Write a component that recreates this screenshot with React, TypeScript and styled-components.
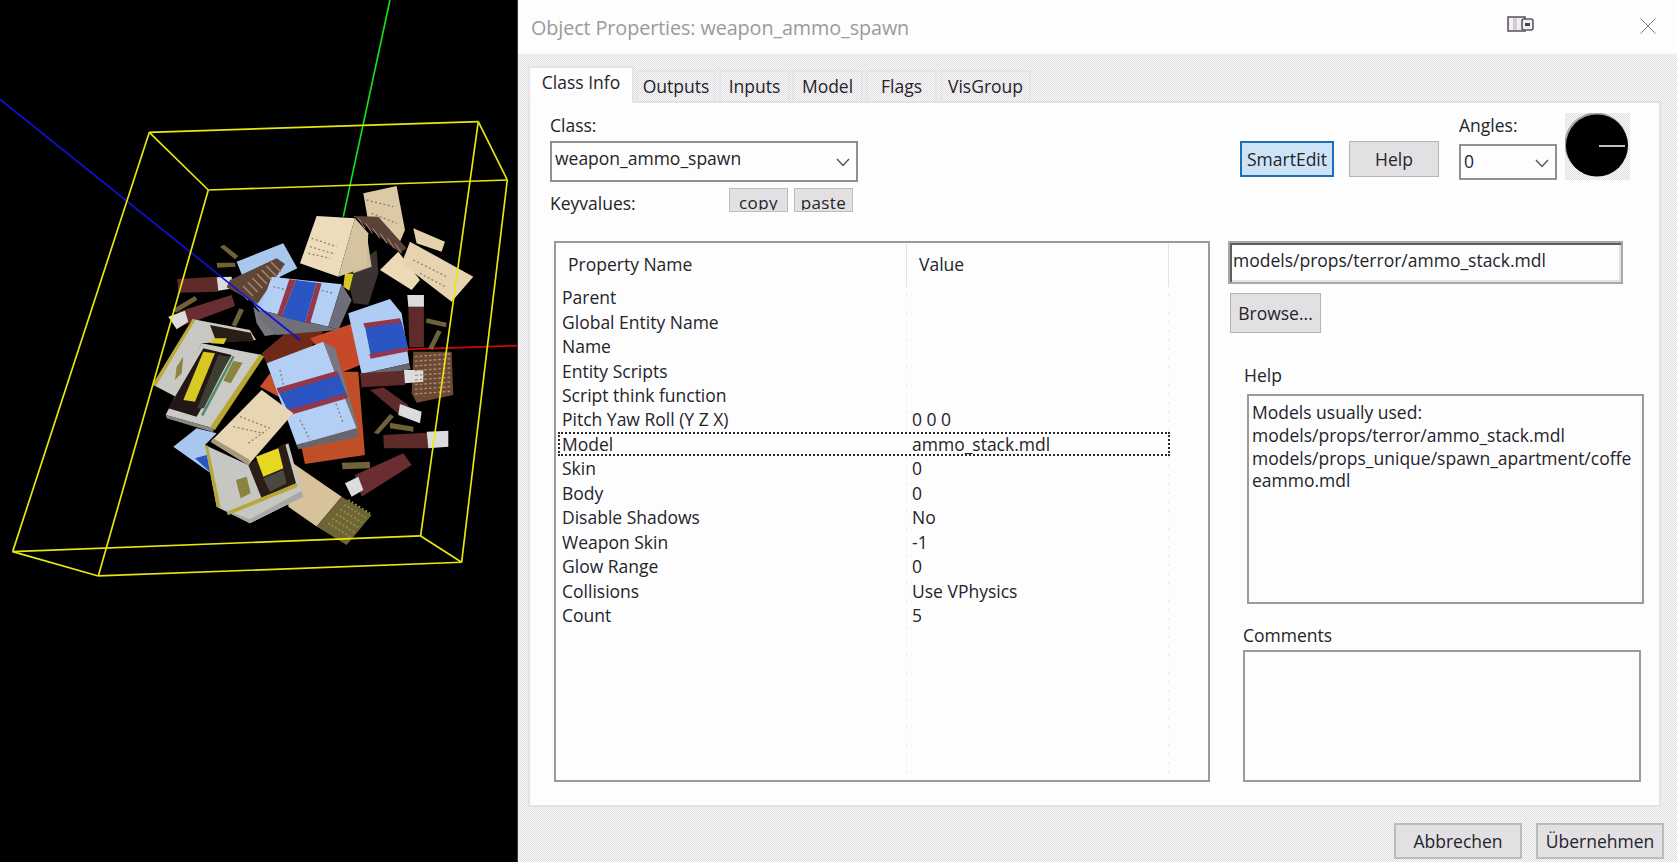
import React from "react";
import styled, { createGlobalStyle, css } from "styled-components";

const Global = createGlobalStyle`
  html, body { margin: 0; padding: 0; background: #000; }
  body { width: 1677px; height: 862px; overflow: hidden; }
  * { box-sizing: border-box; }
`;

const dither = css`
  background-color: #f0eef0;
  background-image: repeating-conic-gradient(#fbfbfb 0 25%, #dfdbe0 0 50%);
  background-size: 2px 2px;
`;

const Page = styled.div`
  display: flex;
  width: 1677px;
  height: 862px;
  font-family: "Open Sans", "Noto Sans", sans-serif;
  font-size: 17.5px;
  color: #24242c;
  letter-spacing: 0;
`;
const Viewport = styled.div`
  width: 517px;
  height: 862px;
  background: #000;
  flex: none;
  overflow: hidden;
`;
const ModelSvg = styled.svg`
  display: block;
`;
const Dialog = styled.div`
  flex: 1;
  display: flex;
  flex-direction: column;
  ${dither}
  border-left: 1px solid #3a3a3a;
`;
const TitleBar = styled.div`
  height: 54px;
  background: #fdfdfd;
  display: flex;
  align-items: center;
  padding-left: 13px;
  flex: none;
`;
const Title = styled.div`
  font-size: 19.8px;
  color: #9a9a9a;
  letter-spacing: -0.1px;
  flex: 1;
`;
const CaptionIcon = styled.svg`
  display: block;
  margin-right: 105px;
  margin-top: -6px;
`;
const CloseIcon = styled.svg`
  display: block;
  margin-right: 21px;
  margin-top: -2px;
`;
const Tabs = styled.div`
  display: flex;
  align-items: flex-end;
  height: 35px;
  margin: 12px 0 0 10px;
  flex: none;
`;
const Tab = styled.div<{ $active?: boolean; $w: number; $gap: number }>`
  width: ${(p) => p.$w}px;
  margin-right: ${(p) => p.$gap}px;
  display: flex;
  align-items: center;
  justify-content: center;
  white-space: nowrap;
  border: 2px solid #e6e4e6;
  border-bottom: none;
  ${(p) =>
    p.$active
      ? css`
          height: 37px;
          margin-bottom: -2px;
          padding-bottom: 7px;
          background: #fdfdfd;
          position: relative;
          z-index: 1;
        `
      : css`
          height: 31px;
          padding-bottom: 2px;
          ${dither}
        `}
`;
const Panel = styled.div`
  width: 1133px;
  height: 706px;
  margin-left: 10px;
  background: #fdfdfd;
  border: 2px solid #e4e2e4;
  padding: 0 0 0 24px;
  flex: none;
`;
const TopSection = styled.div`
  height: 138px;
  display: flex;
  margin-left: -4px;
`;
const ClassBlock = styled.div`
  width: 308px;
  flex: none;
  padding-top: 11px;
`;
const Label = styled.div`
  height: 22px;
  line-height: 22px;
`;
const Combo = styled.div<{ $w: number; $h: number }>`
  width: ${(p) => p.$w}px;
  height: ${(p) => p.$h}px;
  border: 2px solid #8f8f94;
  background: #fdfdfd;
  display: flex;
  align-items: center;
  justify-content: space-between;
  padding: 0 6px 2px 3px;
`;
const ClassCombo = styled(Combo)`
  margin-top: 5px;
  padding-bottom: 7px;
`;
const ChevronMark = styled.svg<{ $drop: number }>`
  display: block;
  margin-top: ${(p) => p.$drop}px;
`;
const KeyRow = styled.div`
  display: flex;
  margin-top: 6px;
`;
const KeyLabel = styled.div`
  width: 179px;
  line-height: 22px;
  padding-top: 4px;
`;
const MiniButton = styled.div<{ $gap?: number }>`
  width: 59px;
  height: 24px;
  margin-left: ${(p) => p.$gap ?? 0}px;
  background: #e2e0e2;
  border: 1px solid #bdbdbd;
  text-align: center;
  font-size: 17px;
  font-weight: 500;
  letter-spacing: 0.4px;
`;
const MiniClip = styled.div`
  height: 21px;
  line-height: 27px;
  overflow: hidden;
`;
const ActionBlock = styled.div`
  display: flex;
  margin-left: 382px;
  flex: none;
`;
const Button = styled.div<{ $w: number; $h: number; $primary?: boolean }>`
  width: ${(p) => p.$w}px;
  height: ${(p) => p.$h}px;
  flex: none;
  display: flex;
  align-items: center;
  justify-content: center;
  white-space: nowrap;
  background: ${(p) => (p.$primary ? "#cde4f7" : "#e2e0e2")};
  border: ${(p) => (p.$primary ? "2px solid #1a6fb5" : "1px solid #b4b4b4")};
`;
const SmartButton = styled(Button)`
  margin-top: 38px;
`;
const HelpButton = styled(Button)`
  margin: 38px 20px 0 15px;
`;
const AnglesColumn = styled.div`
  width: 98px;
  padding-top: 11px;
  flex: none;
`;
const AngleCombo = styled(Combo)`
  margin-top: 8px;
`;
const DialFrame = styled.div`
  width: 65px;
  height: 67px;
  margin: 10px 0 0 8px;
  flex: none;
  ${dither}
`;
const DialFace = styled.svg`
  display: block;
`;
const BottomSection = styled.div`
  display: flex;
  gap: 18px;
`;
const ListBox = styled.div`
  width: 656px;
  height: 541px;
  border: 2px solid #9a9a9e;
  flex: none;
  padding-top: 1px;
`;
const ListHeader = styled.div`
  display: grid;
  grid-template-columns: 351px 262px;
  height: 41px;
`;
const HeaderCell = styled.div`
  height: 41px;
  display: flex;
  align-items: center;
  padding-left: 12px;
  padding-bottom: 2px;
  border-right: 1px solid #e8e0e4;
`;
const RowArea = styled.div`
  background-image:
    linear-gradient(to bottom, #e6e6e6 25%, transparent 25%),
    linear-gradient(to bottom, #e6e6e6 25%, transparent 25%);
  background-size: 1px 9px, 1px 9px;
  background-position: 350px 0, 612px 0;
  background-repeat: repeat-y;
  height: 495px;
`;
const Row = styled.div<{ $selected?: boolean }>`
  display: grid;
  grid-template-columns: 350px 1fr;
  height: 24.46px;
  margin-left: 2px;
  width: 612px;
  padding-left: 4px;
  align-items: center;
  white-space: nowrap;
  ${(p) =>
    p.$selected &&
    css`
      outline: 2px dotted #2a2a2a;
      outline-offset: -2px;
      background: #fdfdfd;
    `}
`;
const SideColumn = styled.div`
  width: 420px;
  flex: none;
`;
const PathField = styled.div`
  width: 395px;
  height: 43px;
  border: 2px solid #a8a8aa;
  box-shadow: inset 2px 2px 0 #5c5c62, inset -2px -2px 0 #e2e2e4;
  background: #fdfdfd;
  padding: 5px 3px;
  line-height: 24px;
`;
const BrowseButton = styled(Button)`
  margin: 9px 0 0 2px;
`;
const HelpLabel = styled(Label)`
  margin: 31px 0 0 16px;
`;
const HelpBox = styled.div`
  width: 397px;
  height: 210px;
  margin: 8px 0 0 19px;
  border: 2px solid #9a9a9e;
  padding: 5px 3px;
  line-height: 22.8px;
  white-space: pre;
  overflow: hidden;
`;
const CommentsLabel = styled(Label)`
  margin: 20px 0 0 15px;
`;
const CommentsBox = styled.div`
  width: 398px;
  height: 132px;
  margin: 4px 0 0 15px;
  border: 2px solid #9a9a9e;
`;
const Footer = styled.div`
  display: flex;
  justify-content: flex-end;
  gap: 14px;
  padding: 16px 13px 0 0;
`;
const FooterButton = styled(Button)`
  border: 2px solid #b9bdb9;
`;

const Chevron = ({ drop = 0 }: { drop?: number }) => (
  <ChevronMark $drop={drop} width="14" height="9" viewBox="0 0 14 9">
    <path d="M1 1l6 6.5L13 1" fill="none" stroke="#55555c" strokeWidth="1.4" />
  </ChevronMark>
);

type Poly = [string, string];
const polys: Poly[] = [
  // back cream boxes
  ["1090,280 1190,258 1215,390 1200,425 1105,365", "#dcc9a6"],
  ["1040,515 1130,450 1135,520 1105,615 1060,610", "#3a3230"],
  ["1035,520 1060,522 1048,572 1030,560", "#d8c820"],
  ["1050,430 1100,400 1115,500 1060,520", "#cdb994"],
  ["1240,385 1335,425 1325,455 1250,430", "#e4d1ad"],
  ["1140,510 1195,455 1260,540 1235,570", "#ecd9b6"],
  ["1230,425 1420,530 1355,605 1205,490", "#e6d3b0"],
  ["950,348 1065,355 1015,530 900,490", "#ecdcbc"],
  ["1065,355 1105,400 1100,500 1015,530", "#d6c4a0"],
  ["1060,348 1135,350 1220,445 1200,458", "#5a4238"],
  // back bullets
  ["660,440 672,434 715,468 705,478", "#6f6238"],
  ["650,488 705,488 707,500 652,503", "#6f6238"],
  ["518,628 585,588 592,600 528,638", "#6f6238"],
  ["695,675 718,625 732,630 708,680", "#6f6238"],
  // shells
  ["532,537 650,530 655,575 535,578", "#5e2a2c"],
  ["650,532 695,530 700,565 655,572", "#dcdcdc"],
  ["535,635 695,585 705,618 540,680", "#6a2e30"],
  ["505,650 555,632 565,665 530,688", "#dcdcdc"],
  // back blue box
  ["710,485 850,430 892,505 840,530 785,640 760,610", "#a9c7ee"],
  ["760,620 850,700 795,708 770,670", "#77777f"],
  ["690,540 830,475 855,492 772,612 680,562", "#5f4535"],
  // orange
  ["785,760 880,680 970,695 930,745 800,790", "#6e2a14"],
  ["930,715 1060,670 1095,660 1130,775 1020,820", "#c8482a"],
  ["1000,815 1075,815 1095,1065 915,1092 905,1045", "#bf4f28"],
  ["780,860 810,820 845,895", "#c8502c"],
  // center blue
  ["815,530 1025,553 985,680 780,630", "#b4cff5"],
  ["1025,553 1055,600 1015,690 985,680", "#6e6e78"],
  ["780,630 985,680 1015,690 830,705 775,650", "#6f6f78"],
  ["888,540 950,548 915,668 845,650", "#2a55c2"],
  ["868,538 888,540 845,650 832,645", "#94374a"],
  ["950,548 965,550 930,672 915,668", "#94374a"],
  // right blue
  ["1045,640 1170,597 1205,640 1228,790 1085,822", "#b0ccf4"],
  ["1095,680 1205,665 1225,745 1112,765", "#2a55c2"],
  ["1090,670 1200,655 1205,667 1095,684", "#94374a"],
  ["1108,762 1222,742 1225,754 1112,776", "#94374a"],
  ["1085,822 1228,790 1232,808 1085,835", "#66666e"],
  // right shell + bullets
  ["1225,620 1272,620 1272,742 1228,742", "#5e2a2c"],
  ["1222,585 1272,585 1272,620 1225,620", "#dcdcdc"],
  ["1280,655 1340,668 1338,682 1278,668", "#6f6238"],
  ["1285,745 1312,690 1325,695 1298,750", "#6f6238"],
  // brick ammo
  ["1240,755 1355,755 1360,885 1250,908 1235,880", "#6b4a36"],
  ["1080,820 1215,812 1215,855 1085,862", "#5e2a2c"],
  ["1212,810 1270,810 1270,845 1215,850", "#dcdcdc"],
  ["1110,870 1150,862 1225,915 1200,945", "#5e2a2c"],
  ["1200,912 1265,935 1260,970 1195,945", "#dcdcdc"],
  ["1122,998 1170,942 1182,950 1135,1003", "#6f6238"],
  ["1170,968 1240,980 1240,995 1170,985", "#6f6238"],
  ["1150,1005 1280,998 1285,1045 1152,1045", "#5e2a2c"],
  ["1280,995 1345,992 1345,1040 1285,1045", "#dcdcdc"],
  ["1025,1088 1110,1085 1110,1105 1028,1108", "#6f6238"],
  ["1065,1125 1210,1060 1235,1095 1085,1190", "#6a2e30"],
  ["1035,1150 1075,1130 1090,1170 1055,1190", "#dcdcdc"],
  // front blue
  ["800,790 970,725 1070,985 890,1035", "#b4cff5"],
  ["970,725 1005,745 1075,985 1070,985", "#77777f"],
  ["890,1035 1070,985 1075,1010 895,1048", "#66666e"],
  ["835,875 1015,820 1040,885 865,935", "#2a55c2"],
  ["830,865 1012,812 1016,826 836,880", "#94374a"],
  ["862,930 1040,880 1044,894 868,946", "#94374a"],
  // bullets box behind
  ["580,658 750,690 768,720 605,730 530,892 460,855", "#c9c9c4"],
  ["630,675 752,698 762,722 650,728", "#2a1c14"],
  ["640,715 680,715 672,732 632,730", "#d8c820"],
  ["578,656 586,660 468,858 458,853", "#bda938"],
  ["530,800 550,770 545,820 525,840", "#8a8440"],
  // bullets box front
  ["605,730 785,765 640,985 497,945", "#cacac6"],
  ["610,745 695,765 590,950 505,925", "#241814"],
  ["610,755 645,760 585,905 550,900", "#d8c820"],
  ["655,765 690,770 612,925 592,925", "#3c3c30"],
  ["697,768 704,770 610,948 603,945", "#4e8a6a"],
  ["780,762 792,770 645,990 628,985", "#b8a830"],
  ["700,782 728,788 692,850 670,842", "#8a8440"],
  ["497,945 640,985 640,997 500,955", "#888880"],
  // small blue + cream
  ["520,1040 590,985 650,1000 615,1035 640,1125", "#a9c7ee"],
  ["585,1075 620,1065 640,1125", "#2a55c2"],
  ["865,1080 1025,1190 950,1280 865,1220", "#d8c29c"],
  ["1025,1190 1115,1245 1040,1335 950,1280", "#6d6536"],
  // yellow box front
  ["615,1035 745,1095 865,1030 910,1190 750,1270 650,1220", "#c6c6c2"],
  ["745,1095 855,1030 888,1150 785,1195", "#2a1c14"],
  ["768,1070 835,1045 850,1105 790,1130", "#e6d820"],
  ["790,1135 850,1110 860,1150 810,1175", "#4a4a40"],
  ["615,1035 624,1038 662,1222 650,1220", "#b8a830"],
  ["680,1235 890,1150 893,1160 684,1246", "#b8a830"],
  ["650,1220 750,1270 910,1190 905,1172 750,1258", "#a8a8a4"],
  ["708,1140 740,1130 752,1180 722,1195", "#8a8440"],
  // front cream
  ["632,1025 785,870 880,940 745,1095", "#e8d5b2"],
  ["632,1025 745,1095 750,1080 640,1015", "#a8987c"],
];

const specks: [number, number, number, number][] = [
  [935, 415, 1010, 440], [930, 440, 1005, 462], [925, 460, 990, 475],
  [700, 980, 790, 1000], [720, 950, 810, 985], [745, 1030, 800, 990],
  [1100, 300, 1180, 320], [1115, 340, 1190, 370], [1240, 480, 1340, 530],
  [1260, 520, 1335, 560], [840, 810, 860, 900], [900, 960, 930, 1020],
  [985, 850, 1030, 970], [820, 560, 860, 570], [940, 565, 1000, 580],
];

const wires: [number, number, number, number][] = [
  [448, 97, 1435, 65], [448, 97, 38, 1355], [38, 1355, 1262, 1308], [1435, 65, 1262, 1308],
  [625, 270, 1522, 240], [625, 270, 295, 1428], [295, 1428, 1385, 1387], [1522, 240, 1385, 1387],
  [448, 97, 625, 270], [1435, 65, 1522, 240], [1262, 1308, 1385, 1387], [38, 1355, 295, 1428],
];

const Model = () => (
  <ModelSvg width="517" height="862" viewBox="0 0 517 862">
    <defs>
      <filter id="soft" x="-5%" y="-5%" width="110%" height="110%">
        <feGaussianBlur stdDeviation="1.2" />
      </filter>
    </defs>
    <g transform="translate(0 100) scale(0.3333)">
      <line x1="1170" y1="-300" x2="1030" y2="350" stroke="#14e014" strokeWidth="5" />
      <line x1="1220" y1="748" x2="1551" y2="737" stroke="#d00808" strokeWidth="5" />
      <g filter="url(#soft)">
        {polys.map(([points, fill], i) => (
          <polygon key={i} points={points} fill={fill} />
        ))}
        {specks.map(([a, b, c, d], i) => (
          <line key={i} x1={a} y1={b} x2={c} y2={d} stroke="#6d6050" strokeWidth="4" strokeDasharray="6 7" opacity="0.7" />
        ))}
        {Array.from({ length: 9 }, (_, i) => (
          <line key={i} x1={1245} y1={770 + i * 14} x2={1352} y2={762 + i * 14} stroke="#b48c70" strokeWidth="4" strokeDasharray="8 6" />
        ))}
        {Array.from({ length: 8 }, (_, i) => (
          <line key={i} x1={715 + i * 14} y1={570 - i * 12} x2={745 + i * 14} y2={600 - i * 12} stroke="#b08a6c" strokeWidth="4" />
        ))}
        {Array.from({ length: 6 }, (_, i) => (
          <line key={i} x1={1075 + i * 22} y1={355 + i * 15} x2={1095 + i * 22} y2={385 + i * 15} stroke="#ab8f80" strokeWidth="3" />
        ))}
        {Array.from({ length: 6 }, (_, i) => (
          <line key={i} x1={985 + i * 12} y1={1270 - i * 14} x2={1050 + i * 12} y2={1310 - i * 14} stroke="#9c9048" strokeWidth="5" strokeDasharray="6 6" />
        ))}
      </g>
      <line x1="-65" y1="-54" x2="900" y2="720" stroke="#1010d8" strokeWidth="5" />
      {wires.map(([a, b, c, d], i) => (
        <line key={i} x1={a} y1={b} x2={c} y2={d} stroke="#e8e810" strokeWidth="5" />
      ))}
    </g>
  </ModelSvg>
);

const rows: [string, string, boolean?][] = [
  ["Parent", ""],
  ["Global Entity Name", ""],
  ["Name", ""],
  ["Entity Scripts", ""],
  ["Script think function", ""],
  ["Pitch Yaw Roll (Y Z X)", "0 0 0"],
  ["Model", "ammo_stack.mdl", true],
  ["Skin", "0"],
  ["Body", "0"],
  ["Disable Shadows", "No"],
  ["Weapon Skin", "-1"],
  ["Glow Range", "0"],
  ["Collisions", "Use VPhysics"],
  ["Count", "5"],
];

export default function App() {
  return (
    <Page>
      <Global />
      <Viewport>
        <Model />
      </Viewport>
      <Dialog>
        <TitleBar>
          <Title>Object Properties: weapon_ammo_spawn</Title>
          <CaptionIcon width="28" height="18" viewBox="0 0 28 18">
            <rect x="1" y="2" width="17" height="14" fill="#f0eef0" stroke="#5a5a66" strokeWidth="1.6" />
            <rect x="6" y="3" width="4" height="12" fill="#d8c8dc" />
            <rect x="15" y="4" width="11" height="11" rx="2" fill="#eef0f4" stroke="#5a5a66" strokeWidth="1.6" />
            <rect x="18" y="8" width="5" height="3" fill="#444" />
          </CaptionIcon>
          <CloseIcon width="16" height="16" viewBox="0 0 16 16">
            <path d="M0.5 0.5l15 15M15.5 0.5l-15 15" stroke="#777" strokeWidth="1" fill="none" />
          </CloseIcon>
        </TitleBar>
        <Tabs>
          <Tab $active $w={106} $gap={2}>Class Info</Tab>
          <Tab $w={80} $gap={3}>Outputs</Tab>
          <Tab $w={71} $gap={2}>Inputs</Tab>
          <Tab $w={71} $gap={3}>Model</Tab>
          <Tab $w={71} $gap={3}>Flags</Tab>
          <Tab $w={91} $gap={0}>VisGroup</Tab>
        </Tabs>
        <Panel>
          <TopSection>
            <ClassBlock>
              <Label>Class:</Label>
              <ClassCombo $w={308} $h={41}>
                weapon_ammo_spawn
                <Chevron drop={9} />
              </ClassCombo>
              <KeyRow>
                <KeyLabel>Keyvalues:</KeyLabel>
                <MiniButton><MiniClip>copy</MiniClip></MiniButton>
                <MiniButton $gap={6}><MiniClip>paste</MiniClip></MiniButton>
              </KeyRow>
            </ClassBlock>
            <ActionBlock>
              <SmartButton $w={94} $h={36} $primary>SmartEdit</SmartButton>
              <HelpButton $w={90} $h={36}>Help</HelpButton>
              <AnglesColumn>
                <Label>Angles:</Label>
                <AngleCombo $w={98} $h={36}>
                  0
                  <Chevron drop={4} />
                </AngleCombo>
              </AnglesColumn>
              <DialFrame>
                <DialFace width="65" height="67" viewBox="0 0 65 67">
                  <circle cx="31" cy="31" r="31.5" fill="#a0a0a0" />
                  <circle cx="32" cy="32.5" r="31" fill="#000" />
                  <path d="M34 33h26" stroke="#fff" strokeWidth="1.5" />
                </DialFace>
              </DialFrame>
            </ActionBlock>
          </TopSection>
          <BottomSection>
            <ListBox>
              <ListHeader>
                <HeaderCell>Property Name</HeaderCell>
                <HeaderCell>Value</HeaderCell>
              </ListHeader>
              <RowArea>
                {rows.map(([name, value, selected]) => (
                  <Row key={name} $selected={selected}>
                    <span>{name}</span>
                    <span>{value}</span>
                  </Row>
                ))}
              </RowArea>
            </ListBox>
            <SideColumn>
              <PathField>models/props/terror/ammo_stack.mdl</PathField>
              <BrowseButton $w={91} $h={40}>Browse...</BrowseButton>
              <HelpLabel>Help</HelpLabel>
              <HelpBox>
                {"Models usually used:\nmodels/props/terror/ammo_stack.mdl\nmodels/props_unique/spawn_apartment/coffe\neammo.mdl"}
              </HelpBox>
              <CommentsLabel>Comments</CommentsLabel>
              <CommentsBox />
            </SideColumn>
          </BottomSection>
        </Panel>
        <Footer>
          <FooterButton $w={128} $h={36}>Abbrechen</FooterButton>
          <FooterButton $w={128} $h={36}>Übernehmen</FooterButton>
        </Footer>
      </Dialog>
    </Page>
  );
}
